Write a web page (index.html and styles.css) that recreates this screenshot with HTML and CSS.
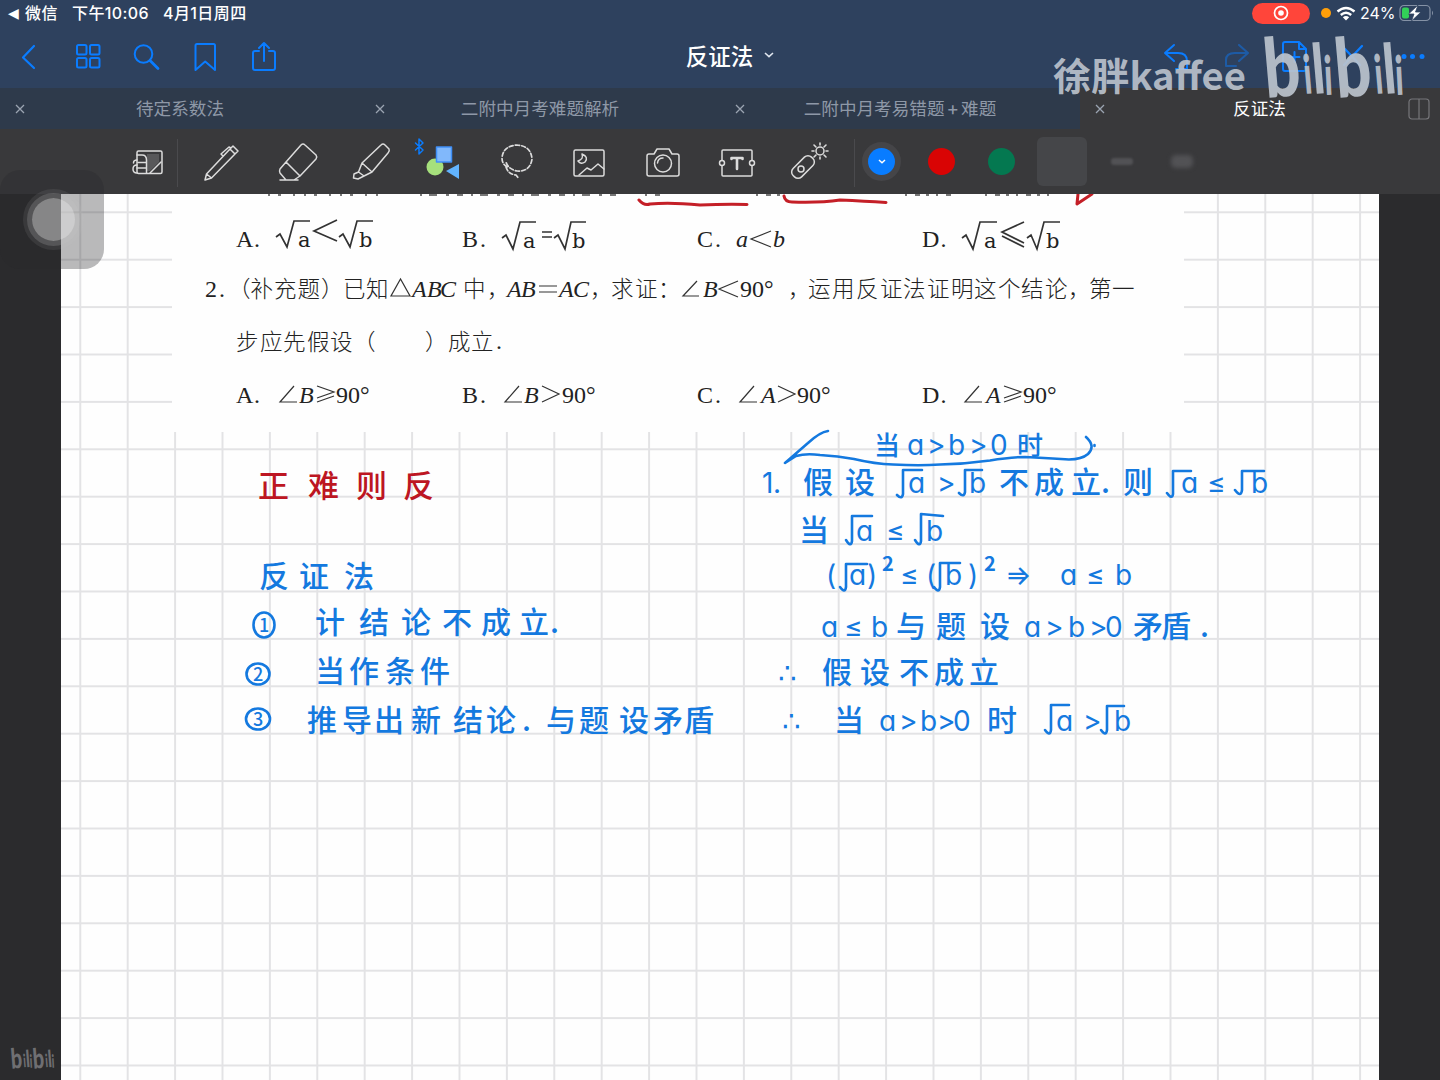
FILE: index.html
```html
<!DOCTYPE html>
<html lang="zh-CN">
<head>
<meta charset="utf-8">
<title>反证法</title>
<link rel="stylesheet" href="styles.css">
</head>
<body>
<div class="app">
  <header class="header">
    <div class="status">
      <div class="status-left"><span class="back-tri">◀</span><span class="s-app">微信</span><span class="s-time">下午10:06</span><span>4月1日周四</span></div>
      <div class="status-right">
        <span class="rec"><svg width="16" height="16" viewBox="0 0 16 16"><circle cx="8" cy="8" r="6.5" fill="none" stroke="#fff" stroke-width="1.7"/><circle cx="8" cy="8" r="2.8" fill="#fff"/></svg></span>
        <span class="mic"></span>
        <svg class="wifi" width="20" height="15" viewBox="0 0 20 15"><g fill="none" stroke="#fff" stroke-width="2.4"><path d="M1.5 5.5Q10 -1.5 18.500 5.500"/><path d="M4.800 9Q10 4.500 15.200 9"/></g><path d="M10 14.500L6.800 11.200Q10 8.600 13.200 11.200Z" fill="#fff"/></svg>
        <span class="pct">24%</span>
        <svg class="batt" width="36" height="18" viewBox="0 0 36 18"><rect x="1" y="1.500" width="30" height="15" rx="4" fill="none" stroke="#8592a6" stroke-width="1.200"/><rect x="3" y="3.500" width="7" height="11" rx="2" fill="#32d158"/><path d="M33 6.500q2 2.500 0 5z" fill="#8592a6"/><path d="M19 1L9.500 10H15L12.500 17L22 8H16.500Z" fill="#fff" stroke="#2e415e" stroke-width=".8"/></svg>
      </div>
    </div>
    <nav class="nav">
      <div class="nav-left">
        <svg class="ni" viewBox="0 0 30 34"><path d="M20 6L9 17.500L20 28" stroke-width="2.200"/></svg>
        <svg class="ni" viewBox="0 0 30 34"><rect x="4" y="5" width="9.500" height="9.500" rx="1.500"/><rect x="17" y="5" width="9.500" height="9.500" rx="1.500"/><rect x="4" y="18" width="9.500" height="9.500" rx="1.500"/><rect x="17" y="18" width="9.500" height="9.500" rx="1.500"/></svg>
        <svg class="ni" viewBox="0 0 30 34"><circle cx="12.500" cy="14" r="8.800"/><path d="M19 20.500L27 28.500" stroke-width="2.800"/></svg>
        <svg class="ni" viewBox="0 0 30 34"><path d="M5.500 5.500Q5.500 4 7 4H23.500Q25 4 25 5.500V30L15.200 21.500L5.500 30Z"/></svg>
        <svg class="ni" viewBox="0 0 30 34"><path d="M10 11H6Q4 11 4 13V28Q4 30 6 30H24Q26 30 26 28V13Q26 11 24 11H20M15 21V3M10 8L15 3L20 8"/></svg>
      </div>
      <div class="nav-title">反证法<svg width="10" height="6" viewBox="0 0 10 6"><path d="M1 1L5 4.600L9 1" fill="none" stroke="#dfe5ee" stroke-width="1.600"/></svg></div>
      <div class="nav-right">
        <svg class="ni" viewBox="0 0 30 34"><path d="M12 5L3 13L12 21M3 13H16Q25 13 25 21V29H14"/></svg>
        <svg class="ni dim" viewBox="0 0 30 34"><path d="M18 5L27 13L18 21M27 13H14Q5 13 5 20V26H15"/></svg>
        <svg class="ni" viewBox="0 0 30 34"><path d="M5 2H19L26 9V29Q26 31 24 31H5Q3 31 3 29V4Q3 2 5 2ZM19 2V9H26M14.500 12V22M9.500 17H19.500"/></svg>
        <svg class="ni" viewBox="0 0 30 34"><path d="M7 9L22 25M24 6L6 25" stroke-width="2.300"/></svg>
        <svg class="ni" viewBox="0 0 30 34"><g fill="#0a7cff" stroke="none"><circle cx="7" cy="16.500" r="2.500"/><circle cx="15.500" cy="16.500" r="2.500"/><circle cx="25" cy="16.500" r="2.500"/></g></svg>
      </div>
    </nav>
    <div class="tabs">
      <div class="tab"><svg class="x" viewBox="0 0 10 10"><path d="M1 1L9 9M9 1L1 9"/></svg><span>待定系数法</span></div>
      <div class="tab"><svg class="x" viewBox="0 0 10 10"><path d="M1 1L9 9M9 1L1 9"/></svg><span>二附中月考难题解析</span></div>
      <div class="tab"><svg class="x" viewBox="0 0 10 10"><path d="M1 1L9 9M9 1L1 9"/></svg><span>二附中月考易错题<i>+</i>难题</span></div>
      <div class="tab active"><svg class="x" viewBox="0 0 10 10"><path d="M1 1L9 9M9 1L1 9"/></svg><span>反证法</span><svg class="split" viewBox="0 0 22 22"><rect x="1" y="1" width="20" height="20" rx="3"/><path d="M11 1V21"/></svg></div>
    </div>
    <div class="toolbar">
      <div class="slot sep"><svg class="ti" viewBox="0 0 44 44"><rect x="11" y="11" width="25" height="22.500" rx="1.500"/><path d="M21 14H33V22L24 31H21Z" fill="#58585a" stroke="none"/><path d="M11 15H16Q20.500 15 20.500 20V33M20 22.500H12M11 20Q7.500 20 7.500 23M11 25Q7 25 7 29Q7 33 11 33M11 28H20M24 33L35 22"/></svg></div>
      <div class="slot"><svg class="ti" viewBox="0 0 44 44"><path d="M6 40L7.500 34L31 9L36 14L12.500 38ZM31 9L34 6L39 11L36 14M7.500 34L12.500 38M24 16L22 14L30 7L32 8"/></svg></div>
      <div class="slot"><svg class="ti" viewBox="0 0 44 44"><path d="M28 5Q30 3 32 5L43 15Q44.500 17 43 19L27 36L13 22Z M13 22L7 29Q6 31 7 33L13 40H21L27 36M7 40H25"/></svg></div>
      <div class="slot"><svg class="ti" viewBox="0 0 44 44"><path d="M34 5Q36 3 38 5L42 9Q43 11 41 13L25 32L15 23ZM15 23L11.500 32L17 36L25 32M11.500 32L7 34L6.500 38L11 39L17 36"/></svg></div>
      <div class="slot"><svg class="ti" viewBox="0 0 44 44"><circle cx="15" cy="27" r="8.500" fill="#a6e07c" stroke="none"/><rect x="16.500" y="7" width="15" height="15" fill="#81b8fb" stroke="#3f8ff7"/><path d="M26 31L39 24V39Z" fill="#62b4ff" stroke="none"/><path d="M-4.500 3L3 10L-1 14V-1L3 3L-4.500 10" stroke="#0a7cff"/></svg></div>
      <div class="slot"><svg class="ti" viewBox="0 0 44 44"><path d="M13 27Q8 24 8 18Q9 6 23 5Q37 6 38 19Q36 32 23 31Q14 29 12 22M12 27Q14 34 22 35L25 39" stroke-dasharray="4 2.200" stroke-width="1.700"/></svg></div>
      <div class="slot"><svg class="ti" viewBox="0 0 44 44"><rect x="7" y="10" width="30" height="26" rx="1.500"/><path d="M12 35L20 28L24 30L31 24L37 29"/><path d="M15 14Q17 19 11 21Q14 25 18 22Q22 17 15 14"/></svg></div>
      <div class="slot"><svg class="ti" viewBox="0 0 44 44"><path d="M8 14H13L16 9H28L31 14H36Q38 14 38 16V34Q38 36 36 36H8Q6 36 6 34V16Q6 14 8 14Z"/><circle cx="22" cy="23.500" r="8.500"/><path d="M16.500 23Q17 18 22 18"/></svg></div>
      <div class="slot"><svg class="ti" viewBox="0 0 44 44"><path d="M7 20V11Q7 10 8 10H36Q37 10 37 11V20M37 26V35Q37 36 36 36H8Q7 36 7 35V26"/><circle cx="7" cy="23" r="2.500"/><circle cx="37" cy="23" r="2.500"/><path d="M16.500 19V18H27.500V19M22 18V29" stroke-width="2.600"/></svg></div>
      <div class="slot sep last"><svg class="ti" viewBox="0 0 44 44"><rect x="-6" y="-13" width="12" height="26" rx="5" transform="translate(15 27) rotate(45)"/><circle cx="13" cy="29" r="3"/><circle cx="32" cy="11" r="4"/><path d="M32 3V5M32 17V19M24 11H26M38 11H40M26 5L28 7M36 7L38 5M36 15L38 17M26 17L28 15" stroke-width="1.600"/></svg></div>
      <div class="cslot"><span class="dot blue"><svg width="8" height="5" viewBox="0 0 8 5"><path d="M1 1L4 3.700L7 1" fill="none" stroke="#fff" stroke-width="1.500"/></svg></span></div>
      <div class="cslot"><span class="dot red"></span></div>
      <div class="cslot"><span class="dot green"></span></div>
      <div class="cslot"><span class="thick"></span></div>
      <div class="cslot"><span class="line1"></span></div>
      <div class="cslot"><span class="line2"></span></div>
    </div>
  </header>
  <main class="desk">
    <svg class="paper" viewBox="61 194 1318 886" width="1318" height="886">
      <defs>
        <pattern id="grid" x="79.300" y="211.300" width="47.400" height="47.400" patternUnits="userSpaceOnUse"><path d="M0 1H47.400M1 0V47.400" stroke="#e3e3e5" stroke-width="2"/></pattern>
      </defs>
      <rect x="61" y="194" width="1318" height="886" fill="#fefefe"/>
      <rect x="61" y="194" width="1318" height="886" fill="url(#grid)"/>
      <rect x="172" y="194" width="1012" height="238" fill="#fefefe"/>
      <g stroke="#777" stroke-width="2"><path d="M268 195H380" stroke-dasharray="2 8 3 12 2 9"/><path d="M420 195H622" stroke-dasharray="2 7 8 9 3 8 6 8"/><path d="M645 195H660M756 195H786M905 195H955M985 195H1050" stroke-dasharray="2 8 5 6 3 7"/></g>
      <g class="print">
        <text x="236" y="247">A<tspan x="254">.</tspan></text><text x="462" y="247">B<tspan x="480">.</tspan></text><text x="697" y="247">C<tspan x="715">.</tspan></text><text x="922" y="247">D<tspan x="940.500">.</tspan></text>
        <text x="736" y="247" class="it">a</text><path d="M771 231L751 239L771 247" class="rad thin"/><text x="773" y="247" class="it">b</text>
        <g class="deja"><text x="298" y="247">a</text><text x="359" y="247">b</text><text x="523" y="248">a</text><text x="572" y="248">b</text><text x="984" y="248">a</text><text x="1046" y="248">b</text></g>
        <path class="rad" d="M276 237L280 234L287 247L294 221H310M339 237L343 234L350 247L357 221H373M337 220L314 231L337 241M502 238L506 235L513 249L520 222H536M554 238L558 235L565 249L571 222H586M542 232H552M542 237H552M962 238L966 235L973 249L980 222H997M1027 238L1031 235L1037 249L1044 222H1060M1024 222L1002 232L1024 243M1002 236L1024 247"/>
        <text x="205" y="297">2<tspan x="219">.</tspan></text>
        <text y="297" class="cn" x="228 250.500 274 297.500 321 343 366">（补充题）已知</text>
        <path class="rad thin" d="M391 296H410L400.500 279Z"/>
        <text x="412 427 440" y="297" class="it">ABC</text>
        <text y="297" class="cn" x="463 487">中，</text>
        <text x="507 521" y="297" class="it">AB</text><path class="rad thin" d="M539 286H557M539 292H557"/><text x="559 573" y="297" class="it">AC</text>
        <text y="297" class="cn" x="590 611 635 658">，求证：</text>
        <path class="rad thin" d="M697 281L683 296H699"/><text x="703" y="297" class="it">B</text><path class="rad thin" d="M738 281L719 289L738 297"/><text x="740" y="297">90°</text>
        <text y="297" class="cn" x="788 808 832 856 880 903 927 951 974 998 1021 1045 1068 1089 1112">，运用反证法证明这个结论，第一</text>
        <text y="350" class="cn" x="236 260 283 307 330 353 425 448 471">步应先假设（）成立</text><text x="496" y="349">.</text>
        <text x="236" y="403">A<tspan x="254">.</tspan></text><text x="462" y="403">B<tspan x="480">.</tspan></text><text x="697" y="403">C<tspan x="715">.</tspan></text><text x="922" y="403">D<tspan x="940.500">.</tspan></text>
        <path class="rad thin" d="M294 386L280 402H297M519 386L505 402H522M754 386L740 402H757M979 386L965 402H982M317 386L334 392L317 398M334 396L317 402M542 386L559 394L542 402M778 386L795 394L778 402M1004 386L1021 392L1004 398M1021 396L1004 402"/>
        <text x="299" y="403" class="it">B</text><text x="336" y="403">90°</text><text x="524" y="403" class="it">B</text><text x="562" y="403">90°</text><text x="761" y="403" class="it">A</text><text x="797" y="403">90°</text><text x="986" y="403" class="it">A</text><text x="1023" y="403">90°</text>
      </g>
      <g class="inkline redline"><path d="M639 200Q644 206 650 204Q670 202 700 205Q725 204 747 204.500M784 196Q785 202 792 202Q820 203 840 200Q865 201 886 202.500M1078 194L1077 204L1092 194"/></g>
      <g class="hand redtext"><text y="497" x="258 308 356 403">正难则反</text></g>
      <g class="hand">
        <text y="587" x="259 299 344">反证法</text>
        <text y="633" x="315 359 401 442 481 519 550">计结论不成立.</text>
        <text y="682" x="315 349 385 420">当作条件</text>
        <text y="731" x="307 342 374 411 453 486 522 546 579 619 653 684">推导出新结论.与题设矛盾</text>
        <g class="small"><text x="259" y="631.500">1</text><text x="253" y="680.500">2</text><text x="253" y="725.500">3</text></g>
        <text y="455" x="874 907 927 948 969 990 1017"><tspan class="cs">当</tspan><tspan class="la">a&gt;b&gt;0</tspan><tspan class="cs">时</tspan></text>
        <text y="493" x="762 773 803 845 908 937 969 999 1034 1071 1101 1123 1181 1207 1251"><tspan class="la">1.</tspan>假设<tspan class="la">a&gt;b</tspan>不成立.则<tspan class="la">a≤b</tspan></text>
        <text y="541" x="799 856 886 926">当<tspan class="la">a≤b</tspan></text>
        <text y="585" x="826 849 867 900 926 945 968 1005 1060 1086 1115" class="la">(a)≤(b)⇒a≤b</text>
        <g class="sup"><text x="882" y="571">2</text><text x="984" y="571">2</text></g>
        <text y="637" x="821 844 871 896 936 980 1024 1045 1068 1089 1105 1133 1161 1200"><tspan class="la">a≤b</tspan>与题设<tspan class="la">a&gt;b&gt;0</tspan>矛盾.</text>
        <text y="683" x="778 822 860 899 934 969"><tspan class="la">∴</tspan>假设不成立</text>
        <text y="731" x="782 834 879 899 920 937 953 987 1056 1083 1114"><tspan class="la">∴</tspan>当<tspan class="la">a&gt;b&gt;0</tspan>时<tspan class="la">a&gt;b</tspan></text>
      </g>
      <g class="inkline">
        <ellipse cx="264" cy="625" rx="10.500" ry="12.500"/><ellipse cx="258" cy="674" rx="11.500" ry="10.500"/><ellipse cx="258" cy="719" rx="12" ry="10.500"/>
        <path d="M828 431Q820 432 808 443L785 463L796 456Q806 453 820 455Q838 456 854 459Q875 464 893 464.500Q920 466 940 464.500Q965 464 990 460.500Q1010 457 1025 457Q1045 458 1061 459Q1080 461 1088 454Q1096 446 1086 437M1094.500 445v1"/>
        <path d="M897 495Q902 500 903 494V470H922M959 493Q964 498 965 492V470H982M1167 493Q1172 500 1173 494V471H1191M1235 490Q1241 498 1242 490V471H1264"/>
        <path d="M846 540Q851 548 852 541V516H872M915 540Q920 548 921 541V514L943 516"/>
        <path d="M840 587Q845 594 846 587V564H867M934 587Q939 594 940 587V563H960"/>
        <path d="M1045 730Q1050 737 1051 730V705H1069M1101 730Q1106 737 1107 730V706H1124"/>
      </g>
    </svg>
  </main>
  <div class="assist"><span></span></div>
  <svg class="mark" viewBox="1050 45 200 60" width="200" height="60"><text x="1053" y="90" class="mk-cn" textLength="193" lengthAdjust="spacingAndGlyphs">徐胖kaffee</text></svg>
  <svg class="mark3 bili" viewBox="1264 37 142 62" width="142" height="62">
    <text transform="translate(1266 98) rotate(-5) scale(.78 1)" class="b">b</text><text transform="translate(1305 94) rotate(-5) scale(.6 1)" class="i">i</text><text transform="translate(1314 94) rotate(-5) scale(.72 1)" class="l">l</text><text transform="translate(1325 95) rotate(-3) scale(.6 1)" class="i">i</text>
    <text transform="translate(1337 98) rotate(-5) scale(.78 1)" class="b">b</text><text transform="translate(1376 94) rotate(-5) scale(.6 1)" class="i">i</text><text transform="translate(1385 94) rotate(-5) scale(.72 1)" class="l">l</text><text transform="translate(1396 95) rotate(-3) scale(.6 1)" class="i">i</text>
  </svg>
  <svg class="mark2 bili" viewBox="1264 37 142 62" width="44" height="21" preserveAspectRatio="none">
    <text transform="translate(1266 98) rotate(-5) scale(.78 1)" class="b">b</text><text transform="translate(1305 94) rotate(-5) scale(.6 1)" class="i">i</text><text transform="translate(1314 94) rotate(-5) scale(.72 1)" class="l">l</text><text transform="translate(1325 95) rotate(-3) scale(.6 1)" class="i">i</text>
    <text transform="translate(1337 98) rotate(-5) scale(.78 1)" class="b">b</text><text transform="translate(1376 94) rotate(-5) scale(.6 1)" class="i">i</text><text transform="translate(1385 94) rotate(-5) scale(.72 1)" class="l">l</text><text transform="translate(1396 95) rotate(-3) scale(.6 1)" class="i">i</text>
  </svg>
</div>
</body>
</html>
```

FILE: styles.css
```css
* { box-sizing: border-box; }
body { margin: 0; background: #2b2b2d; font-family: Inter, "Noto Sans CJK SC", sans-serif; }
.app { position: relative; width: 1440px; height: 1080px; overflow: hidden; display: flex; flex-direction: column; }
.header { background: #2e415e; height: 194px; flex: none; display: flex; flex-direction: column; }
.status { height: 26px; display: flex; justify-content: space-between; align-items: center; color: #fff; font-size: 16px; font-weight: 500; line-height: 26px; padding: 0 8px; }
.status-left { display: flex; align-items: center; letter-spacing: .4px; }
.back-tri { font-size: 14px; width: 17px; font-family: "DejaVu Sans", sans-serif; }
.s-app { width: 47px; }
.s-time { width: 91px; }
.status-right { display: flex; align-items: center; font-weight: 400; }
.rec { width: 58px; height: 21px; border-radius: 11px; background: #ff453a; display: flex; align-items: center; justify-content: center; margin-right: 11px; }
.mic { width: 10px; height: 10px; border-radius: 50%; background: #ff9f0a; margin-right: 5px; }
.wifi { margin-right: 4px; }
.pct { width: 39px; letter-spacing: -.1px; }
.batt { margin-right: -3px; }
.nav { height: 62px; display: flex; justify-content: space-between; align-items: center; }
.nav-left, .nav-right { display: flex; gap: 28.700px; padding-left: 14px; }
.nav-right { padding: 0 13px 0 0; }
.ni { width: 30px; height: 34px; fill: none; stroke: #0a7cff; stroke-width: 2; stroke-linejoin: round; stroke-linecap: round; }
.dim { opacity: .45; }
.nav-title { color: #fff; font-size: 22.500px; font-weight: 500; display: flex; align-items: center; gap: 11px; margin-right: auto; padding: 0 0 4px 407px; }
.tabs { height: 41px; display: grid; grid-template-columns: repeat(4, 1fr); }
.tab { background: #2e3a4b; color: #8e98a7; display: flex; align-items: center; font-size: 17.600px; padding: 0 10px 0 15px; line-height: 40px; }
.tab span { flex: 1; text-align: center; }
.tab i { font-style: normal; font-size: 19px; padding: 0 2px; }
.tab:not(.active) span { padding-right: 15px; }
.x { width: 10px; height: 10px; stroke: #9ba4b1; stroke-width: 1.300; fill: none; }
.tab.active { background: #39393b; color: #fff; }
.split { width: 22px; height: 22px; stroke: #77777b; fill: none; margin-left: -12px; stroke-width: 1.200; }
.tab.active span { padding-right: 6px; }
.toolbar { height: 65px; background: #39393b; display: flex; padding-left: 111px; align-items: center; }
.slot { width: 73.600px; height: 50px; display: flex; align-items: center; justify-content: center; position: relative; }
.sep::after { content: ""; position: absolute; right: 7px; top: 2px; width: 1px; height: 48px; background: #4a4a4d; }
.last::after { right: -8px; }
.ti { width: 44px; height: 44px; fill: none; stroke: #dcdcdc; stroke-width: 1.500; stroke-linejoin: round; stroke-linecap: round; overflow: visible; }
.cslot { width: 60px; display: flex; justify-content: center; align-items: center; }
.last + .cslot { margin-left: 5px; }
.dot { width: 27px; height: 27px; border-radius: 50%; display: flex; align-items: center; justify-content: center; }
.blue { background: #087cff; box-shadow: 0 0 0 6px #454548; }
.red { background: #d90404; }
.green { background: #047850; }
.thick { width: 50px; height: 49px; border-radius: 6px; background: #454649; }
.line1 { width: 22px; height: 7px; border-radius: 3px; background: #525255; filter: blur(1px); }
.line2 { width: 22px; height: 13px; border-radius: 5px; background: #525255; filter: blur(2px); }
.desk { flex: 1; padding-left: 61px; display: flex; background: #2b2b2d; }
.paper { display: block; flex: none; }
.print { font-family: "Liberation Serif", "Noto Sans CJK SC", serif; font-size: 24px; fill: #222; }
.print .cn { font-family: "Noto Sans CJK SC", sans-serif; font-weight: 300; font-size: 22.500px; fill: #222; }
.it { font-style: italic; }
.deja { font-family: "DejaVu Serif", serif; font-size: 21px; }
.rad { fill: none; stroke: #333; stroke-width: 1.700; }
.thin { stroke-width: 1.200; }
.hand { font-family: "Noto Sans CJK SC", sans-serif; font-size: 30px; fill: #1479df; font-weight: 500; }
.hand .cs { font-size: 26px; }
.hand .la { font-family: Inter, "DejaVu Sans", sans-serif; font-feature-settings: "cv11"; font-weight: 400; font-size: 28px; }
.small { font-size: 18px; }
.sup { font-size: 20px; font-weight: 700; }
.redtext { fill: #bd1622; font-size: 31px; }
.inkline { fill: none; stroke: #1479df; stroke-width: 2.600; stroke-linecap: round; stroke-linejoin: round; }
.redline { stroke: #c41f27; stroke-width: 3; }
.assist { position: absolute; left: 0; top: 170px; width: 104px; height: 99px; border-radius: 20px; background: rgba(40, 40, 42, .32); display: flex; align-items: center; padding-left: 32px; }
.assist span { width: 43px; height: 43px; border-radius: 50%; background: rgba(225, 225, 225, .5); box-shadow: 0 0 0 5px rgba(200, 200, 200, .2), 0 0 0 9px rgba(200, 200, 200, .1); }
.mark { position: absolute; left: 1050px; top: 45px; }
.mk-cn { font-family: "Noto Sans CJK SC", sans-serif; font-weight: 700; font-size: 38px; fill: #bcc3cd; fill-opacity: .92; }
.mark2 { position: absolute; left: 11px; top: 1048px; overflow: visible; fill: #6f6f72; }
.mark3 { position: absolute; left: 1264px; top: 37px; overflow: visible; fill: #bcc3cd; fill-opacity: .92; }
.bili { font-family: Lato, sans-serif; font-weight: 900; }
.bili .b { font-size: 82px; }
.bili .l { font-size: 69px; }
.bili .i { font-size: 54px; }
```
